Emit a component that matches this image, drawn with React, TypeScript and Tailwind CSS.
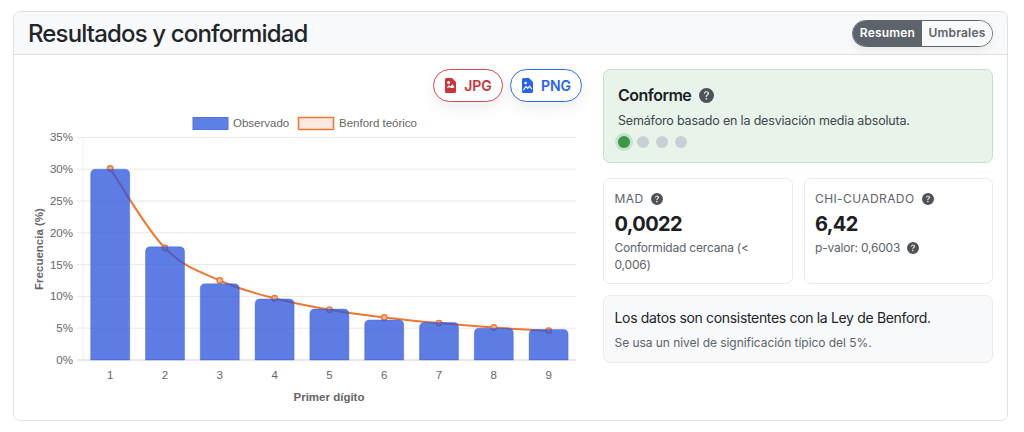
import { BsQuestionCircleFill } from 'react-icons/bs';

const FONT = "font-['Inter','Liberation_Sans',sans-serif]";

// chart geometry, in px of the svg
const X0 = 53;
const X_STEP = 54.8;
const BAR_W = 39;
const Y_ZERO = 251;
const Y_PER_PCT = 6.36;
const observed = [30, 17.8, 12, 9.6, 8, 6.3, 5.9, 5, 4.8];
const benford = [30.1, 17.6, 12.5, 9.7, 7.9, 6.7, 5.8, 5.1, 4.6];

const cx = (i: number) => X0 + X_STEP * (i + 0.5) - 0.2;
const py = (v: number) => Y_ZERO - v * Y_PER_PCT;

function curvePath() {
  // catmull-rom through the points, roughly the chart.js tension look
  const pts = benford.map((v, i) => [cx(i), py(v)]);
  let d = `M${pts[0][0]} ${pts[0][1]}`;
  for (let i = 0; i < pts.length - 1; i++) {
    const p0 = pts[Math.max(i - 1, 0)];
    const p1 = pts[i];
    const p2 = pts[i + 1];
    const p3 = pts[Math.min(i + 2, pts.length - 1)];
    const t = 0.18;
    d += ` C${p1[0] + (p2[0] - p0[0]) * t} ${p1[1] + (p2[1] - p0[1]) * t} ${p2[0] - (p3[0] - p1[0]) * t} ${p2[1] - (p3[1] - p1[1]) * t} ${p2[0]} ${p2[1]}`;
  }
  return d;
}

function BenfordChart() {
  return (
    <svg width="552" height="300" viewBox="0 0 552 300" className="block font-['Liberation_Sans',sans-serif]">
      {/* legend */}
      <rect x="163" y="8.5" width="35" height="12" fill="#5e81e6" stroke="#4f74e3" />
      <text x="203" y="18" fontSize="11.5" fill="#666">Observado</text>
      <rect x="268.5" y="8.5" width="35" height="12" fill="#fde9df" stroke="#f07730" strokeWidth="1.5" />
      <text x="309" y="18" fontSize="11.5" fill="#666">Benford teórico</text>

      {/* grid + y axis */}
      {[0, 5, 10, 15, 20, 25, 30, 35].map((v) => (
        <g key={v}>
          <line x1="47" x2="546" y1={py(v)} y2={py(v)} stroke={v === 0 ? '#e2e2e2' : '#e9e9e9'} strokeWidth={v === 0 ? 1.5 : 1} />
          <text x="43" y={py(v) + 4} fontSize="11.5" fill="#666" textAnchor="end">{v}%</text>
        </g>
      ))}
      <line x1={X0} x2={X0} y1={py(35)} y2={Y_ZERO} stroke="#eeeeee" />

      {/* the line goes under the translucent bars, that is what darkens it over them */}
      <path d={curvePath()} fill="none" stroke="#f07730" strokeWidth="2" />
      {benford.map((v, i) => (
        <circle key={i} cx={cx(i)} cy={py(v)} r="2.8" fill="#f8b48c" stroke="#f07730" strokeWidth="1.3" />
      ))}

      {/* bars */}
      {observed.map((v, i) => {
        const top = py(v);
        const l = cx(i) - BAR_W / 2;
        const r = l + BAR_W;
        return (
          <path
            key={i}
            d={`M${l} ${Y_ZERO} V${top + 5} Q${l} ${top} ${l + 5} ${top} H${r - 5} Q${r} ${top} ${r} ${top + 5} V${Y_ZERO} Z`}
            fill="#2a54dc"
            fillOpacity="0.76"
            stroke="#2a54dc"
            strokeOpacity="0.35"
          />
        );
      })}

      {/* x axis */}
      {observed.map((_, i) => (
        <text key={i} x={cx(i)} y="270" fontSize="11.5" fill="#666" textAnchor="middle">{i + 1}</text>
      ))}
      <text x="299" y="292" fontSize="11.5" fontWeight="700" fill="#666" textAnchor="middle">Primer dígito</text>
      <text
        transform="translate(13 140) rotate(-90)"
        fontSize="11.5"
        fontWeight="700"
        fill="#666"
        textAnchor="middle"
      >
        Frecuencia (%)
      </text>
    </svg>
  );
}

function Help({ size = 12 }: { size?: number }) {
  return <BsQuestionCircleFill size={size} className="shrink-0 text-[#4f5357]" aria-hidden />;
}

// file with a cut corner, picture inside is knocked out in white
function JpgIcon() {
  return (
    <svg width="11" height="15" viewBox="0 0 11 15" aria-hidden className="shrink-0">
      <path d="M1.6 0H7L11 4V13.4A1.6 1.6 0 0 1 9.4 15H1.6A1.6 1.6 0 0 1 0 13.4V1.6A1.6 1.6 0 0 1 1.6 0Z" fill="#c9343b" />
      <circle cx="3.6" cy="4.4" r="1.5" fill="#fff" />
      <path d="M1.4 9.8L4 6.9L5.6 8.4L7.4 6.2L9.6 9.2C8.2 9.9 7.2 10.2 5.6 9.7C4 9.3 2.8 9.6 1.4 9.8Z" fill="#fff" />
    </svg>
  );
}

function PngIcon() {
  return (
    <svg width="11" height="15" viewBox="0 0 11 15" aria-hidden className="shrink-0">
      <path d="M1.6 0H7L11 4V13.4A1.6 1.6 0 0 1 9.4 15H1.6A1.6 1.6 0 0 1 0 13.4V1.6A1.6 1.6 0 0 1 1.6 0Z" fill="#2563eb" />
      <circle cx="3.6" cy="5" r="1.3" fill="#fff" />
      <path d="M1.2 12.2L4 8.6L5.8 10.4L7.6 8.2L9.8 11.2" fill="none" stroke="#fff" strokeWidth="1.1" />
    </svg>
  );
}

function Metric({ label, value, note }: { label: string; value: string; note: React.ReactNode }) {
  return (
    <div className="h-[106px] flex-1 rounded-[7px] border border-[#e9ecef] bg-white px-[10.5px] pt-[11px]">
      <div className="flex items-center gap-[8px] text-[12px] leading-[18px] tracking-[0.4px] text-[#5c636a]">
        {label}
        <Help />
      </div>
      <div className="mt-[2px] text-[20px] leading-[28px] font-bold tracking-[-0.6px] text-[#1c2024]">{value}</div>
      <div className="mt-[1px] text-[12px] leading-[17px] tracking-[-0.2px] text-[#5c636a]">{note}</div>
    </div>
  );
}

export default function App() {
  return (
    <div className={`${FONT} h-[432px] w-[1024px] overflow-hidden bg-white pl-[13px] pt-[11px]`}>
      <div className="h-[410px] w-[995px] rounded-[7px] border border-[#dee2e6] bg-white">
        <div className="flex h-[43px] items-center justify-between rounded-t-[7px] border-b border-[#dee2e6] bg-[#f8f9fa] pl-[14px] pr-[14px]">
          <h1 className="pt-[2px] text-[24px] leading-none font-medium tracking-[-0.85px] text-[#212529]">Resultados y conformidad</h1>
          <div className="flex h-[27px] overflow-hidden rounded-full border border-[#5c636a] text-[12px] font-semibold tracking-[0.2px] shadow-[0_4px_10px_rgba(0,0,0,0.06)]">
            <span className="flex w-[69px] items-center justify-center bg-[#5c636a] text-white">Resumen</span>
            <span className="flex w-[70px] items-center justify-center bg-[#f8f9fa] text-[#5c636a]">Umbrales</span>
          </div>
        </div>

        <div className="flex gap-[21px] pl-[16px] pt-[14px]">
          <div className="w-[552px]">
            <div className="flex justify-end gap-[7px]">
              <button type="button" className="flex h-[33px] w-[70px] items-center justify-center gap-[8px] rounded-full border border-[#cf4a50] bg-white pl-[1px] text-[14px] font-semibold text-[#c9343b] shadow-[0_6px_16px_rgba(0,0,0,0.07)]">
                <JpgIcon />
                JPG
              </button>
              <button type="button" className="flex h-[33px] w-[72px] items-center justify-center gap-[8px] rounded-full border border-[#2f6bf0] bg-white pl-[1px] text-[14px] font-semibold text-[#2563eb] shadow-[0_6px_16px_rgba(0,0,0,0.07)]">
                <PngIcon />
                PNG
              </button>
            </div>
            <div className="mt-[7px]">
              <BenfordChart />
            </div>
          </div>

          <div className="flex w-[390px] flex-col">
            <div className="h-[94px] rounded-[7px] border border-[#bfe3c4] bg-[#e8f4ea] pl-[14px] pt-[15px]">
              <div className="flex items-center gap-[8px] text-[16px] leading-[20px] font-semibold tracking-[-0.5px] text-[#1c2024]">
                Conforme
                <Help size={15} />
              </div>
              <p className="mt-[7px] text-[12.5px] leading-[18px] tracking-[-0.17px] text-[#3f464c]">Semáforo basado en la desviación media absoluta.</p>
              <div className="mt-[6px] flex items-center gap-[7px]">
                <span className="h-[12px] w-[12px] rounded-full bg-[#3a9648] shadow-[0_0_0_3px_#c6e3ca]" />
                <span className="h-[12px] w-[12px] rounded-full bg-[#c6d1d6]" />
                <span className="h-[12px] w-[12px] rounded-full bg-[#c6d1d6]" />
                <span className="h-[12px] w-[12px] rounded-full bg-[#c6d1d6]" />
              </div>
            </div>

            <div className="mt-[15px] flex gap-[11px]">
              <Metric label="MAD" value="0,0022" note="Conformidad cercana (< 0,006)" />
              <Metric
                label="CHI-CUADRADO"
                value="6,42"
                note={
                  <span className="flex items-center gap-[7px]">
                    p-valor: 0,6003
                    <Help />
                  </span>
                }
              />
            </div>

            <div className="mt-[11px] h-[68px] rounded-[7px] border border-[#e9ecef] bg-[#f8f9fa] px-[10.5px] pt-[12px]">
              <p className="text-[14px] leading-[20px] tracking-[-0.33px] text-[#212529]">Los datos son consistentes con la Ley de Benford.</p>
              <p className="mt-[6px] text-[12px] leading-[18px] tracking-[-0.05px] text-[#5c636a]">Se usa un nivel de significación típico del 5%.</p>
            </div>
          </div>
        </div>
      </div>
    </div>
  );
}
